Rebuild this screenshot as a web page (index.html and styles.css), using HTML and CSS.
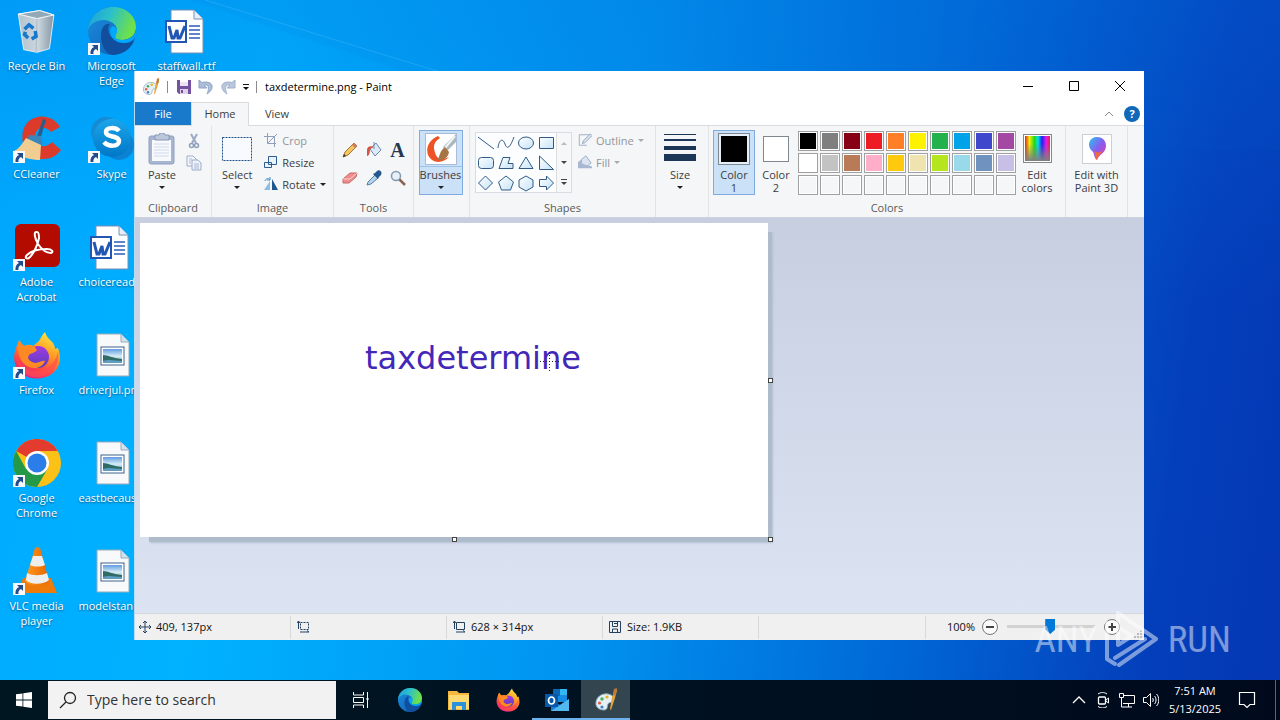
FILE: index.html
```html
<!DOCTYPE html>
<html lang="en">
<head>
<meta charset="utf-8">
<title>taxdetermine.png - Paint</title>
<link rel="stylesheet" href="styles.css">
</head>
<body>
<svg class="defs" aria-hidden="true">
  <defs>
    <linearGradient id="gEdgeTop" x1="0" y1="0" x2="1" y2="0.3"><stop offset="0" stop-color="#1b9de2"/><stop offset=".5" stop-color="#2cc1c8"/><stop offset="1" stop-color="#6ee04a"/></linearGradient>
    <linearGradient id="gEdgeMid" x1="0" y1="0" x2="1" y2="1"><stop offset="0" stop-color="#1a8fe0"/><stop offset="1" stop-color="#0f5bb0"/></linearGradient>
    <linearGradient id="gFox" x1=".8" y1="0" x2=".3" y2="1"><stop offset="0" stop-color="#fff044"/><stop offset=".4" stop-color="#ff9a24"/><stop offset=".75" stop-color="#ff4246"/><stop offset="1" stop-color="#e0208a"/></linearGradient>
    <linearGradient id="gFoxIn" x1="0" y1="0" x2="0" y2="1"><stop offset="0" stop-color="#a03ae0"/><stop offset="1" stop-color="#5a3fc0"/></linearGradient>
    <linearGradient id="gSkype" x1="0" y1="0" x2="0" y2="1"><stop offset="0" stop-color="#1ca6ea"/><stop offset="1" stop-color="#0077c8"/></linearGradient>
    <linearGradient id="gBin" x1="0" y1="0" x2="1" y2="0"><stop offset="0" stop-color="#b4c3ce"/><stop offset=".55" stop-color="#ccd6dd"/><stop offset="1" stop-color="#8496a4"/></linearGradient>
    <linearGradient id="gCone" x1="0" y1="0" x2="1" y2="0"><stop offset="0" stop-color="#ff9b20"/><stop offset="1" stop-color="#e86400"/></linearGradient>
    <linearGradient id="gPhoto" x1="0" y1="0" x2="0" y2="1"><stop offset="0" stop-color="#5e9be0"/><stop offset=".5" stop-color="#d5ecf5"/><stop offset="1" stop-color="#7fb5d0"/></linearGradient>
    <linearGradient id="gShape" x1="0" y1="0" x2="1" y2="1"><stop offset="0" stop-color="#ffffff"/><stop offset="1" stop-color="#c5e3f8"/></linearGradient>
    <linearGradient id="gRainbow" x1="0" y1="0" x2="1" y2="0"><stop offset="0" stop-color="#e02020"/><stop offset=".18" stop-color="#f0f000"/><stop offset=".38" stop-color="#20d820"/><stop offset=".52" stop-color="#00e0f0"/><stop offset=".68" stop-color="#2020f0"/><stop offset=".85" stop-color="#e818e8"/><stop offset="1" stop-color="#f02020"/></linearGradient>
    <linearGradient id="gFade" x1="0" y1="0" x2="0" y2="1"><stop offset=".3" stop-color="#808080" stop-opacity="0"/><stop offset="1" stop-color="#808080"/></linearGradient>
    <linearGradient id="gPin" x1="0" y1="0" x2="1" y2="1"><stop offset="0" stop-color="#23c6f2"/><stop offset=".5" stop-color="#8a5cf0"/><stop offset="1" stop-color="#e83c9c"/></linearGradient>
    <symbol id="arrow" viewBox="0 0 12 12"><rect width="12" height="12" fill="#f6f8fb"/><path d="M4 2h6v6L8 6C6 7 5 8.500 5.500 11H2.500C2 8 3.500 5 6 4z" fill="#234c8c"/></symbol>
    <symbol id="edge" viewBox="0 0 48 48">
      <circle cx="24" cy="24" r="24" fill="url(#gEdgeMid)"/>
      <path d="M0 24C1 9 12 0 25 0c14 0 23 10 23 20 0 8-6 13-14 13-7 0-8-3-6-6 4-8-5-14-13-14C7 13 1 18 0 24z" fill="url(#gEdgeTop)"/>
      <path d="M13 29c0-8 4-13 9-12-4 4-2 17 14 19 5 0 8-1 10-2-4 9-13 14-22 14-7-2-11-10-11-19z" fill="#114f9e"/>
      <path d="M28 27c-2 3-1 6 6 6 7 0 12-3 14-9v4c-1 3-5 8-12 8-9 0-14-6-14-12 0-4 3-6 5-4 3 2 2 5 1 7z" fill="#00a8ff"/>
    </symbol>
    <symbol id="firefox" viewBox="0 0 48 48">
      <path d="M26 10C28 6 30 3 32 1c1 4 4 7 6 9 3 2 4 6 4 8l3-1c3 8 3 18-4 24-8 8-24 9-33 1C0 35 0 25 3 17l3-8 5 6c3-1 6-2 9 0z" fill="url(#gFox)"/>
      <circle cx="25" cy="26" r="11" fill="url(#gFoxIn)"/>
      <path d="M5 12c4 4 10 3 16 3l3 4c-2 3-6 3-8 5-3 4 2 7 6 8 5 0 7-3 10-2-2 5-8 9-16 6C7 32 4 22 5 12z" fill="#ff8a24"/>
      <path d="M4 27C5 38 13 47 25 46c14-1 22-11 20-26-2 13-12 20-23 20-9 0-15-5-18-13z" fill="#ff4f52" opacity=".65"/>
    </symbol>
    <symbol id="word" viewBox="0 0 48 48">
      <path d="M11 3h23l9 9v34H11z" fill="#fff" stroke="#7690b8" stroke-width="1"/><path d="M34 3v9h9" fill="#e6eefa" stroke="#7690b8" stroke-width="1"/>
      <path d="M29 19h11M29 23h11M29 27h11M29 31h11" stroke="#2b5cb8" stroke-width="1.500"/>
      <rect x="6" y="14" width="20" height="21" fill="#fff" stroke="#2256b4" stroke-width="2"/>
      <path d="M9 19l3 12h2l3-8 1 8h2l5-12" fill="none" stroke="#2256b4" stroke-width="3"/>
    </symbol>
    <symbol id="photo" viewBox="0 0 48 48">
      <path d="M9 3h24l8 8v34H9z" fill="#f8f9fb" stroke="#9aaabb" stroke-width="1"/><path d="M33 3v8h8" fill="#cfe2ee" stroke="#9aaabb" stroke-width="1"/>
      <rect x="13" y="16" width="23" height="18" fill="#fff" stroke="#3f638c"/><rect x="15" y="18" width="19" height="14" fill="url(#gPhoto)"/>
      <path d="M15 24c5 0 9 3 19 4v4H15z" fill="#2f6c68"/><path d="M15 30c6-2 12 0 19 0v2H15z" fill="#5f9ec0"/>
    </symbol>
    <symbol id="palette" viewBox="0 0 24 24">
      <path d="M2 17C1 9 8 5 14 6c6 1 7 6 4 8-2 1-3 0-4 2s0 6-4 6c-4 0-7-2-8-5z" fill="#e5eff4" stroke="#8eabb9"/>
      <circle cx="8" cy="11" r="1.700" fill="#46b35a"/><circle cx="13" cy="9" r="1.600" fill="#f1b01c"/><circle cx="5.500" cy="15" r="1.600" fill="#e35d48"/><circle cx="8" cy="19" r="1.600" fill="#3a83d0"/>
      <path d="M21 1l2 1-2 8-4 12-1-1 2-12z" fill="#e8a33c"/><path d="M20 1l3-1-1 6-2 2-1-2z" fill="#bd7a3b"/>
    </symbol>
  </defs>
</svg>

<div class="screen">
  <main class="desktop">
    <svg class="ray" viewBox="0 0 1280 680" preserveAspectRatio="none" aria-hidden="true"><path d="M190 0L640 150H1280V0z" fill="#0a60d8" opacity=".07"/><path d="M205 0L460 78" stroke="#5cc6ff" opacity=".3"/></svg>
    <div class="shortcuts">
      <button class="shortcut"><svg class="pic" viewBox="-2 -2 54 54"><path d="M4 6l24-4 16 5-5 38-14 4-15-3z" fill="url(#gBin)" stroke="#eef3f6"/><path d="M4 6l21 5 19-4-16-5z" fill="#93a9b8" stroke="#fff"/><path d="M25 11l-1 38" stroke="#a9b6c0"/><path d="M11 23l5-5 5 4M23 25l1 6-5 3M15 33l-4-4 1-3" fill="none" stroke="#1678cf" stroke-width="4"/></svg><span>Recycle Bin</span></button>
      <button class="shortcut"><svg class="pic" viewBox="0 0 48 48"><path d="M47 12C38-3 15-2 10 16c-3 15 5 28 20 28 8 0 13-3 18-9l-9-8c-6 7-17 5-17-5 0-9 9-13 16-5z" fill="#dc3a2b"/><path d="M30 4l3 1-6 20-4-1z" fill="#285e8c"/><path d="M16 20l12 1 2 9-16-3z" fill="#3886bb"/><path d="M13 23l15 7-1 15c-8 0-18-2-26-9 5-2 8-7 12-13z" fill="#f1cd91"/><use href="#arrow" x="0" y="36" width="12" height="12"/></svg><span>CCleaner</span></button>
      <button class="shortcut"><svg class="pic" viewBox="0 0 48 48"><rect x="2" y="1" width="45" height="43" rx="6" fill="#b30b00"/><path d="M24 9c-4-1-2 7 1 12 4 6 9 9 13 9 3-1 1-4-4-4-8 0-16 2-20 6-3 3 0 5 3 2 4-4 8-13 9-19 0-3 0-6-2-6z" fill="none" stroke="#fff" stroke-width="2"/><use href="#arrow" x="0" y="36" width="12" height="12"/></svg><span>Adobe<br>Acrobat</span></button>
      <button class="shortcut"><svg class="pic" viewBox="0 0 48 48"><use href="#firefox"/><use href="#arrow" x="0" y="36" width="12" height="12"/></svg><span>Firefox</span></button>
      <button class="shortcut"><svg class="pic" viewBox="0 0 48 48"><circle cx="24" cy="24" r="24" fill="#fbc116"/><path d="M24 24L3.200 12A24 24 0 0 1 44.800 12H24z" fill="#e33b2e"/><path d="M3.200 12A24 24 0 0 0 24 48L34.500 30 24 24 13 30z" fill="#249a48"/><circle cx="24" cy="24" r="12" fill="#fff"/><circle cx="24" cy="24" r="9.500" fill="#2b7de9"/><use href="#arrow" x="0" y="36" width="12" height="12"/></svg><span>Google<br>Chrome</span></button>
      <button class="shortcut"><svg class="pic" viewBox="0 0 48 48"><path d="M10 31h28l6 15H5z" fill="#ee7b0a"/><path d="M24 0l3 1 9 33c-4 6-20 6-24 0L22 1z" fill="url(#gCone)"/><path d="M20 9h9l3 9c-4 2-11 2-15 0zM14 26c6 3 14 3 20 0l2 7c-5 5-19 5-23 0z" fill="#eee"/><use href="#arrow" x="0" y="36" width="12" height="12"/></svg><span>VLC media<br>player</span></button>
      <button class="shortcut"><svg class="pic" viewBox="0 0 48 48"><use href="#edge"/><use href="#arrow" x="0" y="36" width="12" height="12"/></svg><span>Microsoft<br>Edge</span></button>
      <button class="shortcut"><svg class="pic" viewBox="0 0 48 48"><circle cx="18" cy="17" r="15" fill="#168bd5"/><circle cx="31" cy="30" r="15" fill="#0c83d2"/><circle cx="24" cy="23" r="19" fill="url(#gSkype)"/><path d="M31 16c-3-4-13-4-13 1 0 6 13 3 13 9 0 6-11 6-15 1" fill="none" stroke="#fff" stroke-width="4.500"/><use href="#arrow" x="0" y="36" width="12" height="12"/></svg><span>Skype</span></button>
      <button class="shortcut"><svg class="pic" viewBox="0 0 48 48"><use href="#word" x="-3"/></svg><span class="long">choiceread</span></button>
      <button class="shortcut"><svg class="pic" viewBox="0 0 48 48"><use href="#photo"/></svg><span class="long">driverjul.pn</span></button>
      <button class="shortcut"><svg class="pic" viewBox="0 0 48 48"><use href="#photo"/></svg><span class="long">eastbecaus</span></button>
      <button class="shortcut"><svg class="pic" viewBox="0 0 48 48"><use href="#photo"/></svg><span class="long">modelstan</span></button>
      <button class="shortcut"><svg class="pic" viewBox="0 0 48 48"><use href="#word" x="-3"/></svg><span>staffwall.rtf</span></button>
    </div>

    <section class="window" aria-label="Paint">
      <header class="titlebar">
        <svg class="i18" viewBox="0 0 24 24"><use href="#palette"/></svg>
        <i class="rule"></i>
        <button class="qa" aria-label="Save"><svg class="i16" viewBox="0 0 16 16"><path d="M1 1h14v14H3l-2-2z" fill="#75529f"/><path d="M4 1h8v6H4z" fill="#fff"/><path d="M4 4h8M4 6h8" stroke="#d7cde5"/><path d="M4 10h8v5H4z" fill="#ddd3e8"/><path d="M5 11h2v3H5z" fill="#75529f"/></svg></button>
        <button class="qa" aria-label="Undo"><svg class="i16" viewBox="0 0 16 16"><path d="M1 1v8h8L6 6.500c4-2 6 2 3 8.500 8-5 7-14-5-11.500z" fill="#adbcd8" stroke="#92a6c6"/></svg></button>
        <button class="qa" aria-label="Redo"><svg class="i16" viewBox="0 0 16 16"><path d="M15 1v8H7l3-2.500c-4-2-6 2-3 8.500C-1 10 0 1 12 3.500z" fill="#bac6dc" stroke="#a2b1cd"/></svg></button>
        <button class="qa more" aria-label="Customize Quick Access Toolbar"><svg class="i8" viewBox="0 0 8 8"><path d="M1 1.500h6" stroke="#111"/><path d="M1 4h6L4 7z" fill="#111"/></svg></button>
        <i class="rule"></i>
        <h1>taxdetermine.png - Paint</h1>
        <div class="caption">
          <button aria-label="Minimize"><svg class="i10" viewBox="0 0 10 10"><path d="M0 5.500h10" stroke="#000"/></svg></button>
          <button aria-label="Maximize"><svg class="i10" viewBox="0 0 10 10"><path d="M.5.500h9v9h-9z" stroke="#000" fill="none"/></svg></button>
          <button aria-label="Close"><svg class="i10" viewBox="0 0 10 10"><path d="M0 0l10 10M10 0L0 10" stroke="#000" fill="none"/></svg></button>
        </div>
      </header>
      <nav class="tabs">
        <button class="tab file">File</button><button class="tab home">Home</button><button class="tab">View</button>
        <div class="tabs-end">
          <button aria-label="Collapse ribbon"><svg class="i10" viewBox="0 0 10 10"><path d="M1 7l4-4 4 4" stroke="#8a8a8a" fill="none"/></svg></button>
          <button class="help" aria-label="Help">?</button>
        </div>
      </nav>

      <div class="ribbon">
        <div class="group g-clip">
          <div class="tools">
            <button class="big"><svg class="i32" viewBox="0 0 32 32"><rect x="3" y="3" width="25" height="28" rx="2" fill="#a7b5d0" stroke="#8fa0c0"/><path d="M6 7h19v21H6z" fill="#f7f9fd"/><path d="M8 11h15M8 14h15M8 17h15M8 20h15M8 23h15" stroke="#d0daeb"/><path d="M9 2h4l1-2h4l1 2h4v5H9z" fill="#bcc7da" stroke="#8798b7"/></svg><span>Paste</span><i class="caret"></i></button>
            <div class="pair">
              <button aria-label="Cut"><svg class="i16" viewBox="0 0 16 16"><path d="M5 1l5 9M11 1L6 10" stroke="#9aaac6" stroke-width="2"/><circle cx="5.500" cy="12.500" r="2" fill="none" stroke="#8e9fbe" stroke-width="1.500"/><circle cx="10.500" cy="12.500" r="2" fill="none" stroke="#8e9fbe" stroke-width="1.500"/></svg></button>
              <button aria-label="Copy"><svg class="i16" viewBox="0 0 16 16"><path d="M1 1h6l3 3v7H1z" fill="#f5f8fd" stroke="#9dacc8"/><path d="M6 5h6l3 3v7H6z" fill="#edf2fa" stroke="#9dacc8"/><path d="M3 4h3M3 6h2M3 8h2M8 9h5M8 11h5M8 13h5" stroke="#a9b7d0"/></svg></button>
            </div>
          </div>
          <h2>Clipboard</h2>
        </div>
        <div class="group g-image">
          <div class="tools">
            <button class="big"><svg class="i32" viewBox="0 0 32 32"><rect x="1.500" y="4.500" width="29" height="23" fill="#f7fbff" stroke="#1e4e86" stroke-dasharray="2 1"/></svg><span>Select</span><i class="caret"></i></button>
            <div class="list">
              <button class="off"><svg class="i14" viewBox="0 0 14 14"><path d="M3.500 0v10.500H12M0 3.500h10.500V14M4 10l9-9" fill="none" stroke="#8f9fbb"/></svg>Crop</button>
              <button><svg class="i14" viewBox="0 0 14 14"><path d="M4.500 1.500h8v8h-8zM.5 7.500h7v5h-7z" fill="#e9f3fc" stroke="#2b5c94"/></svg>Resize</button>
              <button><svg class="i14" viewBox="0 0 14 14"><path d="M6 13H0l6-9z" fill="#8bbde5"/><path d="M8 2v11h6z" fill="#1f568c"/><path d="M1 4c1-3 4-3 5-1M6 0v3H3" stroke="#3a8ed0" fill="none"/></svg>Rotate<i class="caret"></i></button>
            </div>
          </div>
          <h2>Image</h2>
        </div>
        <div class="group g-tools">
          <div class="tools toolgrid">
            <button aria-label="Pencil"><svg class="i16" viewBox="0 0 16 16"><path d="M1 15l2-5L12 1l3 3-9 9z" fill="#f3c660" stroke="#a77532"/><path d="M1 15l1-3 2 2z" fill="#333"/><path d="M12 1l3 3-2 2-3-3z" fill="#d27a64"/></svg></button>
            <button aria-label="Fill with color"><svg class="i16" viewBox="0 0 16 16"><path d="M4 7l6-6 5 7-6 6z" fill="#dceaf7" stroke="#6e8cae"/><path d="M8 5C4 3 1 5 1 8v6c2 0 3-3 3-7z" fill="#d85340"/><path d="M8 0v7" stroke="#6e8cae"/></svg></button>
            <button class="letter" aria-label="Text">A</button>
            <button aria-label="Eraser"><svg class="i16" viewBox="0 0 16 16"><path d="M1 9l7-6h7l-1 4-7 6H1z" fill="#ec8e8c" stroke="#c96666"/><path d="M1 9h7l7-6" fill="none" stroke="#ffd2cc"/></svg></button>
            <button aria-label="Color picker"><svg class="i16" viewBox="0 0 16 16"><path d="M1 15l1-3 7-7 3 3-7 6z" fill="#b8d3ed" stroke="#547ea6"/><path d="M7 4l5 5 1-2 2-2c2-3-2-6-4-4L9 3z" fill="#23598e"/></svg></button>
            <button aria-label="Magnifier"><svg class="i16" viewBox="0 0 16 16"><circle cx="6" cy="6" r="4.500" fill="#e3f2fd" stroke="#8599a9" stroke-width="1.500"/><path d="M9.500 9.500L15 15" stroke="#876552" stroke-width="2.500"/></svg></button>
          </div>
          <h2>Tools</h2>
        </div>
        <div class="group g-brush">
          <button class="big lit brush"><svg class="i32" viewBox="0 0 32 32"><rect x=".5" y=".5" width="31" height="31" fill="#fff" stroke="#a9bdd8"/><path d="M13 3C1 8-1 21 7 27c6 4 13 1 17-3-7 3-11 3-13-2C7 13 9 9 15 5z" fill="#ee5423"/><path d="M31 1v8l-9 9-4-4z" fill="#abb6bd"/><path d="M30 3L20 15" stroke="#eef3f4" stroke-width="2"/><path d="M20 14l4 5c-1 7-8 9-12 8 3-2 2-9 8-13z" fill="#a77445"/></svg><span>Brushes</span><i class="caret"></i></button>
        </div>
        <div class="group g-shapes">
          <div class="tools">
            <div class="gallery">
              <div class="shapes">
                <button aria-label="Line"><svg class="i18" viewBox="0 0 18 18"><path d="M1 3l16 12"/></svg></button>
                <button aria-label="Curve"><svg class="i18" viewBox="0 0 18 18"><path class="open" d="M1 14C2 5 6 4 8 10c2 6 5 4 9-7"/></svg></button>
                <button aria-label="Oval"><svg class="i18" viewBox="0 0 18 18"><ellipse cx="9" cy="9" rx="7.500" ry="6"/></svg></button>
                <button aria-label="Rectangle"><svg class="i18" viewBox="0 0 18 18"><path d="M2.500 3.500h14v11h-14z"/></svg></button>
                <button aria-label="Rounded rectangle"><svg class="i18" viewBox="0 0 18 18"><rect x="1.500" y="3.500" width="15" height="11" rx="3"/></svg></button>
                <button aria-label="Polygon"><svg class="i18" viewBox="0 0 18 18"><path d="M6 3.500h7l-2 6h5v5H2z"/></svg></button>
                <button aria-label="Triangle"><svg class="i18" viewBox="0 0 18 18"><path d="M9 3l7 11.500H2z"/></svg></button>
                <button aria-label="Right triangle"><svg class="i18" viewBox="0 0 18 18"><path d="M2.500 2l14 13.500h-14z"/></svg></button>
                <button aria-label="Diamond"><svg class="i18" viewBox="0 0 18 18"><path d="M8.500 2l7 7-7 7-7-7z"/></svg></button>
                <button aria-label="Pentagon"><svg class="i18" viewBox="0 0 18 18"><path d="M9 2l7.500 6-3 8h-9l-3-8z"/></svg></button>
                <button aria-label="Hexagon"><svg class="i18" viewBox="0 0 18 18"><path d="M9 2l7 4v7l-7 4-7-4V6z"/></svg></button>
                <button aria-label="Right arrow"><svg class="i18" viewBox="0 0 18 18"><path d="M2.500 5.500h7V2l7 7-7 7v-3.500h-7z"/></svg></button>
              </div>
              <div class="scroll">
                <button aria-label="Scroll up"><svg class="i8" viewBox="0 0 8 8"><path d="M1 6h6L4 3z" fill="#bbb"/></svg></button>
                <button aria-label="Scroll down"><svg class="i8" viewBox="0 0 8 8"><path d="M1 3h6L4 6z" fill="#444"/></svg></button>
                <button aria-label="More shapes"><svg class="i8" viewBox="0 0 8 8"><path d="M1 1.500h6" stroke="#444"/><path d="M1 4h6L4 7z" fill="#444"/></svg></button>
              </div>
            </div>
            <div class="list">
              <button class="off"><svg class="i14" viewBox="0 0 16 16"><path d="M13 2H1.500v12H10" fill="none" stroke="#98a7c2"/><path d="M5 12l1-3 8-8 2 2-8 8z" fill="#dce4f0" stroke="#8fa0bd"/></svg>Outline<i class="caret"></i></button>
              <button class="off"><svg class="i14" viewBox="0 0 16 16"><path d="M4 5l5-4 6 8-6 5-5-5z" fill="#dae4f2" stroke="#94a5c2"/><path d="M0 15V8l4-3v5l12 3v2z" fill="#a8b8d3"/></svg>Fill<i class="caret"></i></button>
            </div>
          </div>
          <h2>Shapes</h2>
        </div>
        <div class="group g-size">
          <button class="big"><svg class="i32" viewBox="0 0 32 32"><path d="M0 1h32v1H0zM0 6h32v2H0zM0 13h32v4H0zM0 21h32v7H0z" fill="#1b3657"/></svg><span>Size</span><i class="caret"></i></button>
        </div>
        <div class="group g-colors">
          <div class="tools">
            <button class="big lit color"><i class="chip black"></i><span>Color<br>1</span></button>
            <button class="big color"><i class="chip white"></i><span>Color<br>2</span></button>
            <div class="palette">
              <button class="sw k1" aria-label="Black"></button><button class="sw k2" aria-label="Gray"></button><button class="sw k3" aria-label="Dark red"></button><button class="sw k4" aria-label="Red"></button><button class="sw k5" aria-label="Orange"></button><button class="sw k6" aria-label="Yellow"></button><button class="sw k7" aria-label="Green"></button><button class="sw k8" aria-label="Turquoise"></button><button class="sw k9" aria-label="Indigo"></button><button class="sw k10" aria-label="Purple"></button>
              <button class="sw k11" aria-label="White"></button><button class="sw k12" aria-label="Light gray"></button><button class="sw k13" aria-label="Brown"></button><button class="sw k14" aria-label="Rose"></button><button class="sw k15" aria-label="Gold"></button><button class="sw k16" aria-label="Light yellow"></button><button class="sw k17" aria-label="Lime"></button><button class="sw k18" aria-label="Light turquoise"></button><button class="sw k19" aria-label="Blue-gray"></button><button class="sw k20" aria-label="Lavender"></button>
              <button class="sw" aria-label="Custom 1"></button><button class="sw" aria-label="Custom 2"></button><button class="sw" aria-label="Custom 3"></button><button class="sw" aria-label="Custom 4"></button><button class="sw" aria-label="Custom 5"></button><button class="sw" aria-label="Custom 6"></button><button class="sw" aria-label="Custom 7"></button><button class="sw" aria-label="Custom 8"></button><button class="sw" aria-label="Custom 9"></button><button class="sw" aria-label="Custom 10"></button>
            </div>
            <button class="big color"><svg class="i32" viewBox="0 0 32 32"><rect x="2.500" y="1.500" width="28" height="28" fill="#fff" stroke="#888"/><path d="M4 3h25v25H4z" fill="url(#gRainbow)"/><path d="M4 3h25v25H4z" fill="url(#gFade)"/></svg><span>Edit<br>colors</span></button>
          </div>
          <h2>Colors</h2>
        </div>
        <div class="group g-3d">
          <button class="big color"><svg class="i32" viewBox="0 0 32 32"><rect x="1.500" y="1.500" width="29" height="29" fill="#fff" stroke="#cfcfcf"/><path d="M16 4c6 0 9 4 9 9 0 7-7 8-9 14-4-3-2-7-5-9-6-6-2-14 5-14z" fill="url(#gPin)"/><path d="M13 18c3 2 7 2 9-1-2 4-5 5-6 10-3-3-1-6-3-9z" fill="#f36b35"/></svg><span>Edit with<br>Paint 3D</span></button>
        </div>
      </div>

      <div class="workarea">
        <div class="sheet">
          <div class="shade"></div>
          <div class="paper"><p>taxdetermine</p><svg class="cross" viewBox="0 0 19 19"><path d="M0 9.500h19M9.500 0v19" stroke="#222" stroke-dasharray="1 2"/></svg></div>
          <i class="handle e"></i><i class="handle s"></i><i class="handle se"></i>
        </div>
      </div>

      <footer class="status">
        <div class="cell"><svg class="i12" viewBox="0 0 12 12"><path d="M6 0v12M0 6h12M4 2l2-2 2 2M4 10l2 2 2-2M2 4L0 6l2 2M10 4l2 2-2 2" stroke="#24405f" fill="none"/></svg>409, 137px</div>
        <div class="cell"><svg class="i12" viewBox="0 0 12 12"><path d="M3.500 1.500h8v7h-8z" stroke="#24405f" stroke-dasharray="2 1" fill="none"/><path d="M1.500 0v8M0 2l1.500-2L3 2M3 11h9l-2-1.500" stroke="#24405f" fill="none"/></svg></div>
        <div class="cell"><svg class="i12" viewBox="0 0 12 12"><path d="M3.500 1.500h8v7h-8zM1.500 0v8M0 2l1.500-2L3 2M3 11h9l-2-1.500" stroke="#24405f" fill="none"/></svg>628 × 314px</div>
        <div class="cell"><svg class="i12" viewBox="0 0 12 12"><path d="M.5.500h11v11h-11zM3.500.500v5h5v-5M3.500 11V8h5v3M5 2.500h3" stroke="#24405f" fill="none"/></svg>Size: 1.9KB</div>
        <div class="cell grow"></div>
        <div class="zoom"><label for="zoom">100%</label>
          <button aria-label="Zoom out"><svg class="i16" viewBox="0 0 16 16"><circle cx="8" cy="8" r="7.500" fill="#fafafa" stroke="#777"/><path d="M4 8h8" stroke="#444" stroke-width="2"/></svg></button>
          <input id="zoom" type="range" min="0" max="100" value="49">
          <button aria-label="Zoom in"><svg class="i16" viewBox="0 0 16 16"><circle cx="8" cy="8" r="7.500" fill="#fafafa" stroke="#777"/><path d="M4 8h8M8 4v8" stroke="#444" stroke-width="2"/></svg></button>
        </div>
        <svg class="grip" viewBox="0 0 10 10" aria-hidden="true"><path d="M7 1h2v2H7zM4 4h2v2H4zM7 4h2v2H7zM1 7h2v2H1zM4 7h2v2H4zM7 7h2v2H7z" fill="#bbb"/></svg>
      </footer>
    </section>

    <div class="watermark"><span>ANY</span><svg viewBox="0 0 58 64"><path d="M3 15v34M14 5v32M14 5l38 26-37 26M3 15l0 36 8 5M14 37l14-9-14-9M11 50l30-19" fill="none" stroke="#fff" stroke-width="4" stroke-linejoin="round" stroke-linecap="round"/></svg><span>RUN</span></div>
  </main>

  <footer class="taskbar">
    <button class="task start" aria-label="Start"><svg class="i16" viewBox="0 0 16 16"><path d="M0 2.300l6.500-.9v6.200H0zM7.300 1.300L16 0v7.600H7.300zM0 8.400h6.500v6.200L0 13.700zM7.300 8.400H16V16l-8.700-1.300z" fill="#fff"/></svg></button>
    <div class="search"><svg class="i18" viewBox="0 0 18 18"><circle cx="11" cy="7" r="5.500" fill="none" stroke="#222" stroke-width="1.300"/><path d="M7 11l-6 6" stroke="#222" stroke-width="1.300"/></svg><input type="text" aria-label="Search" placeholder="Type here to search"></div>
    <button class="task" aria-label="Task View"><svg class="i18" viewBox="0 0 18 18"><path d="M1.500 1v3h10V1M1.500 17v-3h10v3M1.500 6.500h10v5h-10zM15.500 1v16M14 8h3" stroke="#fff" fill="none"/></svg></button>
    <button class="task" aria-label="Microsoft Edge"><svg class="i24" viewBox="0 0 48 48"><use href="#edge"/></svg></button>
    <button class="task" aria-label="File Explorer"><svg class="i24" viewBox="0 0 24 24"><path d="M1 3h9l2 2h10v17H1z" fill="#f5b73e"/><path d="M2 7h20v14H2z" fill="#ffda72"/><path d="M5 14h14v8h-4v-4H9v4H5z" fill="#2b91d8"/></svg></button>
    <button class="task" aria-label="Firefox"><svg class="i24" viewBox="0 0 48 48"><use href="#firefox"/></svg></button>
    <button class="task open" aria-label="Outlook"><svg class="i24" viewBox="0 0 24 24"><path d="M8 1h14v13H8z" fill="#168de2"/><path d="M8 1h7v7H8z" fill="#0a65b5"/><path d="M15 1h7v6h-7z" fill="#35b5f2"/><path d="M6 11l9 6 9-6v12H6z" fill="#1d7bd4"/><path d="M24 11v12H6z" fill="#50b9ef"/><path d="M0 6h13v13H0z" fill="#0758a8"/><ellipse cx="6.500" cy="12.500" rx="3" ry="3.500" stroke="#fff" stroke-width="1.700" fill="none"/></svg></button>
    <button class="task open active" aria-label="Paint"><svg class="i24" viewBox="0 0 24 24"><use href="#palette"/></svg></button>
    <div class="tray">
      <button aria-label="Show hidden icons"><svg class="i16" viewBox="0 0 16 16"><path d="M2 11l6-6 6 6" stroke="#fff" stroke-width="1.300" fill="none"/></svg></button>
      <button aria-label="Meet Now"><svg class="i16" viewBox="0 0 16 16"><rect x="3.500" y="5" width="7" height="7" rx="1" fill="none" stroke="#fff" stroke-width="1.300"/><path d="M11 8l2.500-2v5L11 9M3 2c3-2 6-2 9 0M3 14.500c3 2 6 2 9 0" fill="none" stroke="#fff"/></svg></button>
      <button aria-label="Network"><svg class="i16" viewBox="0 0 16 16"><path d="M5 3.500h10.500v8H4M9.500 12v3M6 15h7M.5 1.500h4v4h-4zM2.500 6v9H6" fill="none" stroke="#fff"/></svg></button>
      <button aria-label="Volume"><svg class="i16" viewBox="0 0 16 16"><path d="M.5 5.500h3l4-4v13l-4-4h-3zM9.500 6c1 1 1 3 0 4M11.500 4c2 2 2 6 0 8M13.500 2c3 3 3 9 0 12" fill="none" stroke="#fff"/></svg></button>
      <button class="clock">7:51 AM<br>5/13/2025</button>
      <button class="note" aria-label="Notifications"><svg class="i18" viewBox="0 0 18 18"><path d="M1.500 1.500h15v12H12l-3 3-3-3H1.500z" fill="none" stroke="#fff" stroke-width="1.200"/></svg></button>
    </div>
    <button class="peek" aria-label="Show desktop"></button>
  </footer>
</div>
</body>
</html>
```
FILE: styles.css
```css
* { box-sizing: border-box; }
html, body { height: 100%; margin: 0; }
body { font: 11px/15px "Open Sans", "Noto Sans", sans-serif; color: #3c3c3c; overflow: hidden; }
button { font: inherit; color: inherit; background: none; border: 0; padding: 0; margin: 0; }
h1, h2, p { margin: 0; font: inherit; }
svg { display: block; flex: none; }
i { display: block; }
.defs { position: absolute; width: 0; height: 0; }
.i8 { width: 8px; height: 8px; }
.i10 { width: 10px; height: 10px; }
.i12 { width: 12px; height: 12px; }
.i14 { width: 14px; height: 14px; }
.i16 { width: 16px; height: 16px; }
.i18 { width: 18px; height: 18px; }
.i24 { width: 24px; height: 24px; }
.i32 { width: 32px; height: 32px; }

.screen { display: flex; flex-direction: column; height: 100vh; }
.desktop {
  position: relative; flex: 1; min-height: 0; overflow: hidden;
  background:
    linear-gradient(180deg, rgba(0, 110, 220, .25), rgba(0, 110, 220, 0) 45%),
    linear-gradient(98deg, #00aaff 0%, #00b2ff 20%, #0094f0 48%, #0068d6 72%, #043fbb 90%, #0437b4 100%);
}
.ray { position: absolute; inset: 0; width: 100%; height: 100%; }

.shortcuts { position: relative; display: grid; grid-auto-flow: column; grid-template-rows: repeat(6, 108px); grid-auto-columns: 73px; column-gap: 2px; justify-content: start; padding-top: 7px; }
.shortcut { display: flex; flex-direction: column; align-items: center; gap: 3px; color: #fff; text-shadow: 0 1px 2px rgba(0, 0, 0, .55); }
.shortcut span { white-space: nowrap; }
.shortcut .long { width: 66px; text-align: left; }
.pic { width: 48px; height: 48px; }

.window { position: absolute; inset: 71px 136px 40px 134px; display: flex; flex-direction: column; background: #fff; border-left: 1px solid #b9dcf5; }
.titlebar { display: flex; align-items: center; height: 31px; padding: 0 1px 0 7px; gap: 6px; color: #000; flex: none; }
.titlebar h1 { flex: 1; padding-left: 2px; }
.rule { width: 1px; height: 12px; background: #8a8a8a; }
.titlebar .rule:first-of-type { margin: 0 2px 0 1px; }
.caption { display: flex; align-self: stretch; }
.caption button { width: 46px; display: grid; place-items: center; padding-bottom: 1px; }

.tabs { display: flex; height: 24px; flex: none; border-bottom: 1px solid #dadbdc; }
.tab { width: 56px; height: 23px; }
.tab.file { width: 56px; background: #1979ca; color: #fff; }
.tab.home { height: 24px; width: 58px; padding-bottom: 2px; background: #f5f6f7; border: 1px solid #dadbdc; border-bottom: 0; }
.tabs-end { margin-left: auto; display: flex; align-items: center; gap: 10px; padding-right: 4px; }
.help { width: 16px; height: 16px; border-radius: 50%; background: #0f68b8; color: #fff; font-weight: 700; line-height: 16px; }

.ribbon { display: flex; flex: none; height: 92px; background: #f5f6f7; border-bottom: 1px solid #cdd2dc; }
.group { display: flex; flex-direction: column; align-items: center; justify-content: space-between; padding: 4px 0 1px; border-right: 1px solid #e2e3e4; }
.group h2 { color: #5a5a5a; line-height: 16px; }
.g-clip { width: 77px; }
.g-image { width: 122px; }
.g-tools { width: 80px; }
.g-brush { width: 56px; }
.g-shapes { width: 186px; }
.g-size { width: 53px; }
.g-colors { width: 357px; }
.g-3d { width: 62px; }
.tools { display: flex; }
.big { display: flex; flex-direction: column; align-items: center; width: 44px; min-height: 65px; padding-top: 2px; line-height: 13px; border: 1px solid transparent; }
.big span { margin-top: 3px; white-space: nowrap; }
.caret { width: 0; height: 0; border: 3px solid transparent; border-top-color: #222; border-bottom: 0; }
.big .caret { margin-top: 5px; }
.lit { background: #cbe1f8; border-color: #7fabdf; }
.brush { margin-right: 2px; }
.brush span { align-self: stretch; border-top: 1px solid #9fc2ea; margin-top: 1px; padding-top: 1px; }
.pair { display: flex; flex-direction: column; gap: 6px; padding: 3px 0 0 2px; }
.g-clip .tools, .g-image .tools, .g-size .big { margin-right: 4px; }
.g-image .tools { gap: 5px; }
.list { display: flex; flex-direction: column; }
.list button { display: flex; align-items: center; gap: 4px; height: 22px; padding-bottom: 2px; }
.off { color: #92959b; }
.off .caret { border-top-color: #aaa; }
.toolgrid { display: grid; grid-template-columns: repeat(3, 24px); grid-auto-rows: 28px; padding-top: 6px; }
.toolgrid button { display: grid; place-items: center; }
.toolgrid .letter { font: 700 20px/20px "Liberation Serif", serif; color: #24384e; }
.g-shapes .tools { gap: 6px; align-self: stretch; padding-left: 5px; }
.gallery { display: flex; height: 61px; margin-top: 2px; border: 1px solid #d8dde4; background: #fbfdff; }
.shapes { display: grid; grid-template-columns: repeat(4, 20px); grid-auto-rows: 20px; }
.shapes button { display: grid; place-items: center; }
.shapes svg { fill: url(#gShape); stroke: #315b85; stroke-width: 1; }
.shapes .open { fill: none; }
.scroll { display: grid; grid-auto-rows: 1fr; width: 15px; border-left: 1px solid #dedede; background: #f6f7f8; }
.scroll button { display: grid; place-items: center; }
.g-colors .tools { align-self: stretch; padding-left: 4px; }
.color { width: 42px; }
.chip { width: 32px; height: 32px; border: 1px solid #7f8790; box-shadow: inset 0 0 0 2px #e5effa; background: #000; }
.chip.white { width: 26px; height: 26px; margin: 3px 0; background: #fff; box-shadow: none; }
.palette { display: grid; grid-template-columns: repeat(10, 20px); grid-auto-rows: 20px; gap: 2px; padding: 1px 0 0 1px; }
.sw { border: 1px solid #a0a0a0; box-shadow: inset 0 0 0 1px #fff; }
.k1 { background: #000; } .k2 { background: #7f7f7f; } .k3 { background: #880015; } .k4 { background: #ed1c24; } .k5 { background: #ff7f27; }
.k6 { background: #fff200; } .k7 { background: #22b14c; } .k8 { background: #00a2e8; } .k9 { background: #3f48cc; } .k10 { background: #a349a4; }
.k11 { background: #fff; } .k12 { background: #c3c3c3; } .k13 { background: #b97a57; } .k14 { background: #ffaec9; } .k15 { background: #ffc90e; }
.k16 { background: #efe4b0; } .k17 { background: #b5e61d; } .k18 { background: #99d9ea; } .k19 { background: #7092be; } .k20 { background: #c8bfe7; }

.workarea { flex: 1; min-height: 0; overflow: hidden; padding: 5px; background: linear-gradient(#c6cee0, #dce4f3); }
.sheet { position: relative; width: 628px; height: 314px; }
.shade { position: absolute; inset: 9px -4px -5px 9px; background: #aebbca; box-shadow: 1px 1px 2px #b5c1d0; }
.paper { position: absolute; inset: 0; background: #fff; color: #4327b8; font: 32px/38px "DejaVu Sans", sans-serif; }
.paper p { position: absolute; left: 225px; top: 116px; }
.cross { position: absolute; left: 400px; top: 129px; width: 19px; height: 19px; }
.handle { position: absolute; width: 5px; height: 5px; background: #fff; border: 1px solid #444; }
.handle.e { right: -5px; top: 155px; }
.handle.s { left: 312px; bottom: -5px; }
.handle.se { right: -5px; bottom: -5px; }

.status { position: relative; display: flex; align-items: stretch; flex: none; height: 27px; color: #111; background: #f0f0f0; border-top: 1px solid #d5d8dc; }
.cell { display: flex; align-items: center; gap: 6px; width: 156px; padding: 0 0 2px 6px; margin: 2px 0 1px; border-right: 1px solid #d9d9d9; }
.cell:first-child { padding-left: 4px; gap: 5px; }
.cell.grow { flex: 1; }
.zoom { display: flex; align-items: center; gap: 7px; padding: 0 24px 1px 21px; }
.zoom input { appearance: none; width: 92px; height: 16px; margin: 0; padding: 0 2px; background: linear-gradient(#d2d2d2, #d2d2d2) center / 88px 3px no-repeat; }
.zoom input::-webkit-slider-thumb { appearance: none; width: 10px; height: 15px; background: #0078d7; border: 0; clip-path: polygon(0 0, 100% 0, 100% 70%, 50% 100%, 0 70%); }
.grip { position: absolute; right: 1px; bottom: 1px; width: 10px; height: 10px; }

.watermark { position: absolute; right: 49px; bottom: 8px; display: flex; align-items: center; gap: 6px; color: #fff; opacity: .48; font: 37px/62px "Liberation Sans Narrow", "Roboto Condensed", "DejaVu Sans Condensed", sans-serif; }
.watermark svg { width: 58px; height: 64px; }

.taskbar { display: flex; align-items: stretch; flex: none; height: 40px; color: #fff; background: linear-gradient(90deg, #001722, #000f20 70%, #000a1c); }
.task { width: 49px; display: grid; place-items: center; }
.start { width: 48px; }
.search { display: flex; align-items: center; gap: 10px; width: 288px; margin: 1px 0; padding-left: 11px; background: #f2f2f2; }
.search input { flex: 1; min-width: 0; border: 0; background: none; font: 14px/20px "Open Sans", "Noto Sans", sans-serif; padding: 0; outline: 0; }
.search input::placeholder { color: #333; opacity: 1; }
.task.open { box-shadow: inset 0 -2px #6cb2ed; }
.task.active { background: #33454f; }
.tray { display: flex; align-items: center; gap: 8px; margin-left: auto; }
.clock { width: 54px; line-height: 18px; margin-left: 1px; }
.note { margin: 0 19px 0 8px; }
.peek { width: 5px; border-left: 1px solid #5c6670; }
```
